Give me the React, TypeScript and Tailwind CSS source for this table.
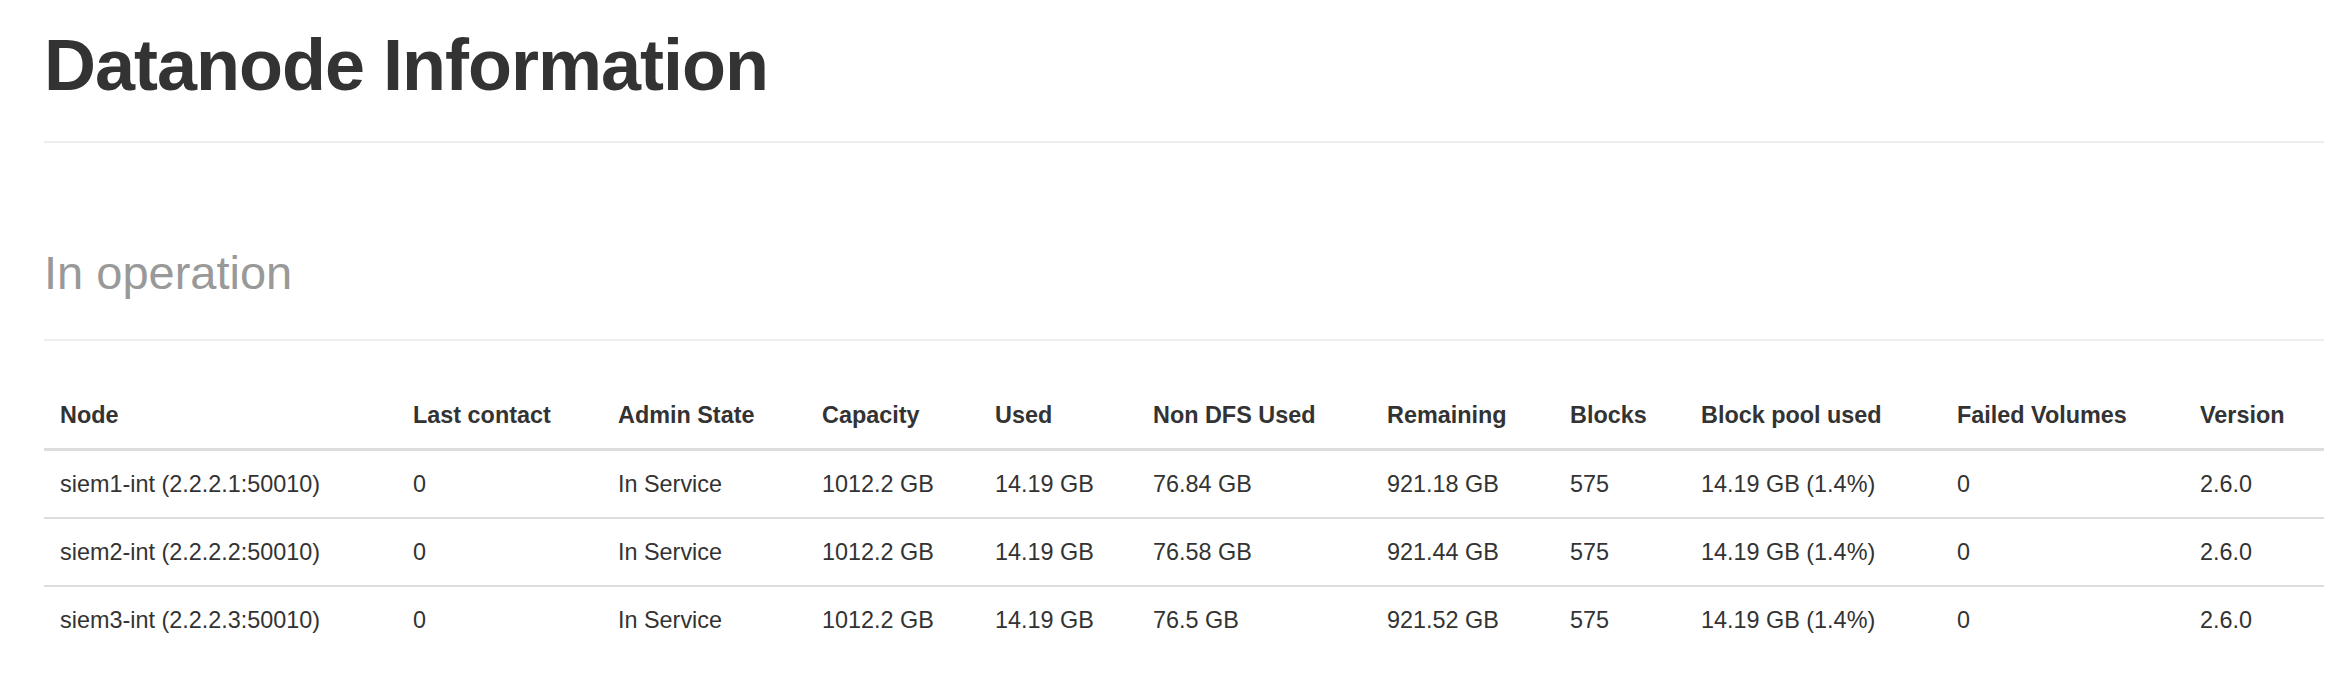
import React from "react";

const headers = [
  "Node",
  "Last contact",
  "Admin State",
  "Capacity",
  "Used",
  "Non DFS Used",
  "Remaining",
  "Blocks",
  "Block pool used",
  "Failed Volumes",
  "Version",
];

const rows = [
  ["siem1-int (2.2.2.1:50010)", "0", "In Service", "1012.2 GB", "14.19 GB", "76.84 GB", "921.18 GB", "575", "14.19 GB (1.4%)", "0", "2.6.0"],
  ["siem2-int (2.2.2.2:50010)", "0", "In Service", "1012.2 GB", "14.19 GB", "76.58 GB", "921.44 GB", "575", "14.19 GB (1.4%)", "0", "2.6.0"],
  ["siem3-int (2.2.2.3:50010)", "0", "In Service", "1012.2 GB", "14.19 GB", "76.5 GB", "921.52 GB", "575", "14.19 GB (1.4%)", "0", "2.6.0"],
];

export default function App() {
  return (
    <div className="min-h-screen bg-white text-[#333] font-['Liberation_Sans',Arial,Helvetica,sans-serif] pl-[44px] pr-[22px] pt-[29px]">
      <div className="border-b-2 border-[#eee] pb-[40px]">
        <h1 className="text-[72px] leading-[72px] font-bold tracking-[-1px] text-[#333]">
          Datanode Information
        </h1>
      </div>

      <div className="mt-[104px] border-b-2 border-[#eee] pb-[40px]">
        <h3 className="text-[47px] leading-[52px] font-normal text-[#999]">In operation</h3>
      </div>

      <table className="mt-[41px] w-full table-fixed border-separate border-spacing-0 text-[23.4px] leading-[34px]">
        <colgroup>
          <col className="w-[353px]" />
          <col className="w-[205px]" />
          <col className="w-[204px]" />
          <col className="w-[173px]" />
          <col className="w-[158px]" />
          <col className="w-[234px]" />
          <col className="w-[183px]" />
          <col className="w-[131px]" />
          <col className="w-[256px]" />
          <col className="w-[243px]" />
          <col className="w-[140px]" />
        </colgroup>
        <thead>
          <tr>
            {headers.map((h) => (
              <th
                key={h}
                className="px-[16px] py-[16px] text-left font-bold whitespace-nowrap border-b-[3px] border-[#ddd]"
              >
                {h}
              </th>
            ))}
          </tr>
        </thead>
        <tbody>
          {rows.map((r, i) => (
            <tr key={i}>
              {r.map((c, j) => (
                <td
                  key={j}
                  className={
                    i === 0
                      ? "px-[16px] py-[16px] text-left whitespace-nowrap"
                      : "px-[16px] py-[16px] text-left whitespace-nowrap border-t-2 border-[#ddd]"
                  }
                >
                  {c}
                </td>
              ))}
            </tr>
          ))}
        </tbody>
      </table>
    </div>
  );
}
